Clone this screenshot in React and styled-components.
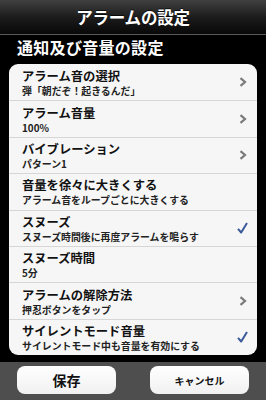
import React from "react";
import styled, { createGlobalStyle } from "styled-components";

const Global = createGlobalStyle`
  html, body { margin: 0; padding: 0; background: #000; }
  body { font-family: "Noto Sans CJK JP", "Noto Sans", sans-serif; }
  * { box-sizing: border-box; }
`;

const Screen = styled.div`
  width: 266px;
  height: 400px;
  background: #000;
  display: flex;
  flex-direction: column;
  overflow: hidden;
`;

const TitleBar = styled.header`
  height: 35px;
  flex: none;
  background: linear-gradient(#404040 0%, #1c1c1c 50%, #080808 100%);
  border-bottom: 1px solid #5a5a5a;
  display: flex;
  align-items: center;
  justify-content: center;
  color: #fff;
  font-size: 16.5px;
  font-weight: 700;
  letter-spacing: -0.2px;
  text-shadow: 0 -1px 0 rgba(0, 0, 0, 0.7);
`;

const SectionHeader = styled.h2`
  margin: 0;
  height: 29px;
  flex: none;
  padding: 0 0 6px 17px;
  display: flex;
  align-items: center;
  color: #fff;
  font-size: 16px;
  font-weight: 700;
  letter-spacing: 0.3px;
`;

const Card = styled.div`
  margin: 0 9px;
  height: 291px;
  flex: none;
  background: #f6f6f6;
  border-radius: 9px;
  overflow: hidden;
  display: flex;
  flex-direction: column;
`;

const Row = styled.div`
  height: 36.4px;
  flex: none;
  display: flex;
  align-items: center;
  padding: 0 8px 0 13px;
  border-top: ${(p) => (p.$first ? "none" : "1px solid #d6d6d6")};
`;

const Texts = styled.div`
  flex: 1;
  display: flex;
  flex-direction: column;
  gap: 1px;
  padding-top: 1px;
`;

const RowTitle = styled.div`
  font-size: 12.3px;
  line-height: 15px;
  font-weight: 700;
  color: #111;
`;

const RowSub = styled.div`
  font-size: 9.9px;
  line-height: 12px;
  font-weight: 700;
  color: #222;
`;

const Accessory = styled.div`
  width: 12px;
  display: flex;
  justify-content: center;
  align-items: center;
  margin-right: ${(p) => (p.$check ? "1px" : "0")};
`;

const Gap = styled.div`
  height: 7px;
  flex: none;
`;

const Toolbar = styled.footer`
  flex: 1;
  background: #4e4e4e;
  display: flex;
  align-items: center;
  padding: 0 17px 2px 17px;
  justify-content: space-between;
`;

const Button = styled.button`
  width: 99px;
  height: 28px;
  border: none;
  border-radius: 8px;
  background: linear-gradient(#ffffff, #f1f1f1);
  font-family: "Noto Sans CJK JP", "Noto Sans", sans-serif;
  font-weight: 700;
  font-size: ${(p) => p.$size}px;
  color: #111;
  padding: 0;
  display: flex;
  align-items: center;
  justify-content: center;
`;

const Chevron = () => (
  <svg width="8" height="10" viewBox="0 0 8 10">
    <path d="M1.5 1.2 L6 5 L1.5 8.8" fill="none" stroke="#7b7b7b" strokeWidth="2.2" />
  </svg>
);

const Check = () => (
  <svg width="11" height="12" viewBox="0 0 11 12">
    <path d="M1 6.8 L4.2 10.5 L10 1" fill="none" stroke="#3b5a9a" strokeWidth="2" strokeLinejoin="round" />
  </svg>
);

const rows = [
  { t: "アラーム音の選択", s: "弾「朝だぞ！起きるんだ」", a: "chev" },
  { t: "アラーム音量", s: "100%", a: "chev" },
  { t: "バイブレーション", s: "パターン1", a: "chev" },
  { t: "音量を徐々に大きくする", s: "アラーム音をループごとに大きくする" },
  { t: "スヌーズ", s: "スヌーズ時間後に再度アラームを鳴らす", a: "check" },
  { t: "スヌーズ時間", s: "5分" },
  { t: "アラームの解除方法", s: "押忍ボタンをタップ", a: "chev" },
  { t: "サイレントモード音量", s: "サイレントモード中も音量を有効にする", a: "check" },
];

export default function App() {
  return (
    <Screen>
      <Global />
      <TitleBar>アラームの設定</TitleBar>
      <SectionHeader>通知及び音量の設定</SectionHeader>
      <Card>
        {rows.map((r, i) => (
          <Row key={i} $first={i === 0}>
            <Texts>
              <RowTitle>{r.t}</RowTitle>
              <RowSub>{r.s}</RowSub>
            </Texts>
            <Accessory $check={r.a === "check"}>
              {r.a === "chev" && <Chevron />}
              {r.a === "check" && <Check />}
            </Accessory>
          </Row>
        ))}
      </Card>
      <Gap />
      <Toolbar>
        <Button $size={14}>保存</Button>
        <Button $size={10}>キャンセル</Button>
      </Toolbar>
    </Screen>
  );
}
